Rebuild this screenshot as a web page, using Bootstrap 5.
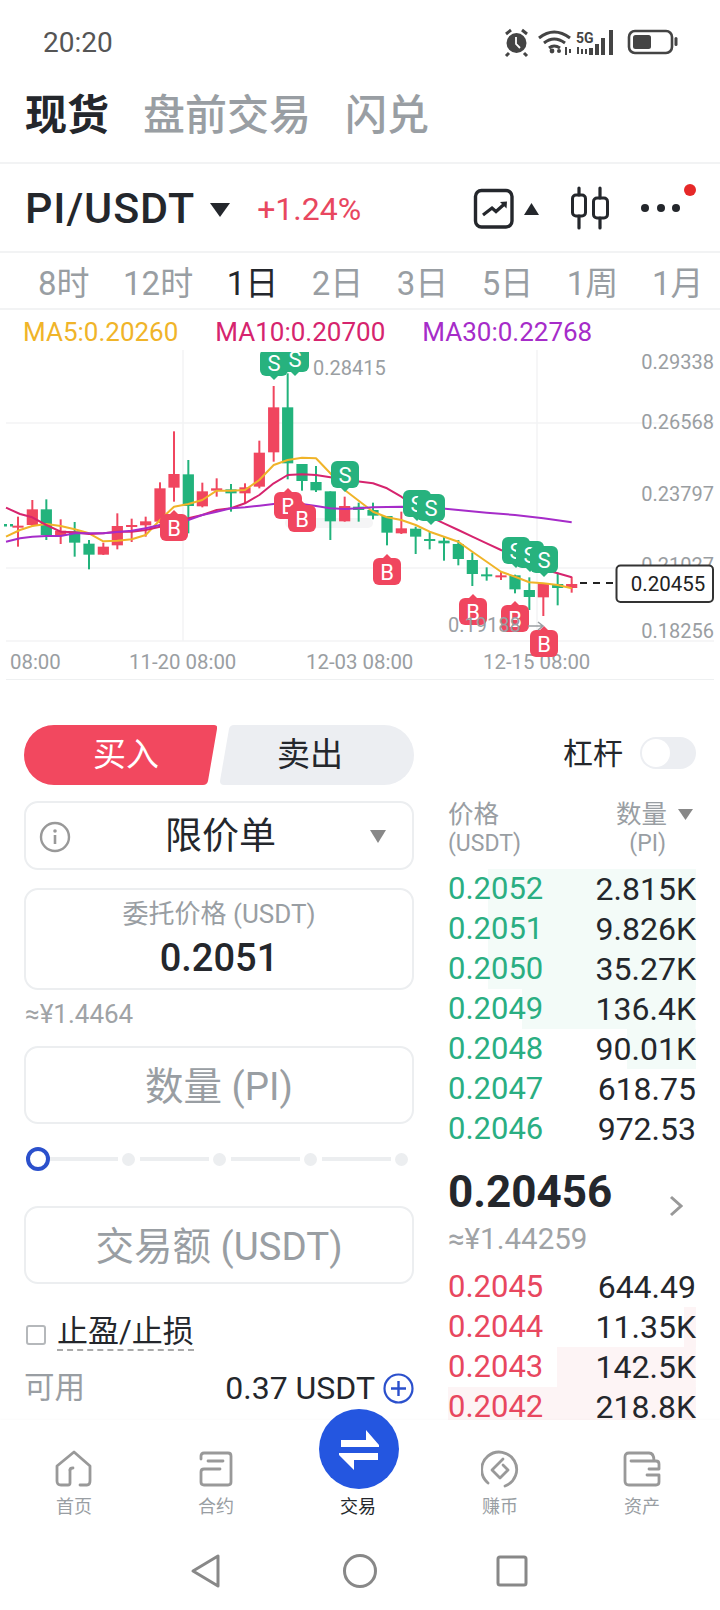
<!DOCTYPE html>
<html lang="zh">
<head>
<meta charset="utf-8">
<title>PI/USDT</title>
<link href="https://cdn.jsdelivr.net/npm/bootstrap@5.3.0/dist/css/bootstrap.min.css" rel="stylesheet">
<style>
:root{--ink:#24272c;--mute:#999ea3;--line:#eceef0;--up:#2aae82;--down:#e8475f;--blue:#2456e0}
html,body{margin:0;background:#fff}
body{width:720px;height:1610px;overflow:hidden;font-family:Roboto,"Noto Sans CJK SC",sans-serif;color:var(--ink)}
svg{display:block}
.statusbar{height:80px;padding:5px 41px 0 43px;font-size:28px;color:#555}
.tabbar{height:84px;padding:0 25px 12px;gap:34px;font-size:42px;font-weight:500;color:var(--mute);border-bottom:2px solid #f2f3f4}
.tabbar .on{font-weight:700;color:var(--ink)}
.pairrow{height:89px;padding:2px 0 0 25px;border-bottom:2px solid #f2f3f4;position:relative}
.pairname{font-size:43px;font-weight:500;letter-spacing:.9px}
.pairchg{font-size:32px;color:var(--down);margin-left:27px}
.tri{width:0;height:0;border-left:10px solid transparent;border-right:10px solid transparent;border-top:14px solid var(--ink);margin-left:15px;margin-top:2px}
.reddot{position:absolute;left:684px;top:20px;width:12px;height:12px;border-radius:50%;background:#e62828}
.pairicons{margin-right:30px;margin-top:-2px}
.timerow{height:57px;padding:6px 0 0 38px;gap:33.500px;font-size:33px;color:var(--mute);border-bottom:2px solid #f2f3f4;white-space:nowrap}
.timerow .on{color:var(--ink)}
.marow{height:35px;padding:9px 0 0 23px;gap:37px;font-size:26px;line-height:1}
.trade{height:740px;overflow:hidden;padding:45px 24px 0;gap:34px}
.leftcol{width:390px;flex:none}
.rightcol{width:248px;flex:none}
.sidebtn{height:60px;font-size:33px;line-height:60px;text-align:center}
.buybtn{width:193px;background:#f2485f;color:#fff;clip-path:path('M30 0H190Q194 0 193 4L184 56Q183 60 179 60H30A30 30 0 0 1 30 0Z');padding-left:11px}
.sellbtn{width:194px;margin-left:3px;background:#eceef2;clip-path:path('M14 0H164A30 30 0 0 1 164 60H4Q0 60 0 56L9 4Q10 0 14 0Z');padding-right:14px}
.fieldbox{border:2px solid var(--line);border-radius:14px;background:#fff}
.selectbox{height:69px;margin-top:16px;padding:2px 26px 0 13px;font-size:37px}
.priceinput{height:102px;margin-top:18px;text-align:center}
.pricelabel{font-size:26px;color:var(--mute);line-height:30px;padding-top:9px}
.pricevalue{font-size:38px;font-weight:500;line-height:50px;margin-top:4px}
.fiatnote{font-size:26px;color:#a0a3a6;line-height:28px;margin-top:10px;padding-left:1px}
.amountbox{height:78px;text-align:center;line-height:77px;font-size:38.500px;font-weight:400;color:var(--mute)}
.mt18{margin-top:18px}.mt35{margin-top:35px}
.sliderline{height:24px;margin-top:23px;padding-left:2px}
.sliderthumb{width:24px;height:24px;border-radius:50%;border:4px solid #2b50cc;flex:none}
.sliderseg{height:4px;background:var(--line);flex:none}
.sliderdot{width:13px;height:13px;border-radius:50%;background:var(--line);flex:none}
.tprow{margin-top:30px;height:38px;padding-left:2px}
.tprow .form-check-input{width:20px;height:20px;margin:11px 11px 0 0;border:2px solid #b5b8bb;border-radius:3px;flex:none}
.tplabel{font-size:31px;line-height:35px;border-bottom:2px dashed #aaa}
.availrow{margin-top:18px;font-size:30.500px;line-height:36px}
.availrow .lbl{color:var(--mute)}
.availnum{font-size:32px;gap:8px}
.levrow{height:56px;font-size:30px;gap:17px}
.levtrack{width:56px;height:32px;border-radius:16px;background:#eceef2;padding:2px}
.levknob{width:28px;height:28px;border-radius:50%;background:#fff}
.obhead{margin-top:19px;font-size:25.500px;line-height:29px;color:var(--mute);height:69px}
.obhead .subl{font-size:23px}
.obrow{height:40px;line-height:40px;font-size:31px;background-repeat:no-repeat;background-position:right top}
.obrow .qty{font-size:32px}
.bidrow{background-image:linear-gradient(#f3fbf8,#f3fbf8)}
.askrow{background-image:linear-gradient(#fdf4f5,#fdf4f5)}
.bidrow .px{color:var(--up)}
.askrow .px{color:var(--down)}
.midblock{height:118px;padding-top:19px}
.midprice{font-size:44px;font-weight:700;line-height:48px}
.midfiat{font-size:29.500px;color:#a0a3a6;line-height:32px;margin-top:7px}
.midchev{margin:27px 13px 0 0}
.tabnav{height:190px;background:#fff;position:relative;box-shadow:0 -1px 2px rgba(0,0,0,.02)}
.navgrid{padding:30px 3px 0;display:grid;grid-template-columns:repeat(5,142px)}
.navitem{text-align:center;font-size:18px;color:var(--mute);line-height:22px}
.navitem svg{margin:0 auto 8px}
.navspacer{height:46px}
.navitem.on{color:var(--ink)}
.navbubble{position:absolute;left:319px;top:-11px;width:80px;height:80px;border-radius:50%;background:var(--blue)}
.sysbar{margin-top:32px}
</style>
</head>
<body>

<div class="statusbar d-flex align-items-center justify-content-between">
  <span>20:20</span>
  <svg width="175" height="30" viewBox="505 28 175 30" fill="none">
    <circle cx="517.5" cy="43" r="10" fill="#444"/>
    <path d="M507 34l5-4M528 34l-5-4M510 53l-3 3M525 53l3 3" stroke="#444" stroke-width="3"/>
    <path d="M517 37v7l4 4" stroke="#fff" stroke-width="1.8"/>
    <path d="M540 38q15-12 31 0M545 43q10-8 21 0M550 48q5-4 11 0" stroke="#444" stroke-width="3"/>
    <circle cx="553" cy="51" r="2.4" fill="#444"/><circle cx="560" cy="51" r="2" fill="#444"/>
    <path d="M567 47v8M571 49v4" stroke="#444" stroke-width="2"/>
    <text x="577" y="43" font-size="14" font-weight="700" fill="#444" font-family="Roboto">5G</text>
    <path d="M579 47v7M583 49v5M587 49v5" stroke="#444" stroke-width="2"/>
    <path d="M592 48v7M598 44v11M604 38v17M612 30v25" stroke="#444" stroke-width="4"/>
    <rect x="630" y="31" width="43" height="22" rx="6" stroke="#444" stroke-width="2.6"/>
    <rect x="634" y="35" width="18" height="14" rx="2.5" fill="#444"/>
    <rect x="675.5" y="37" width="3" height="9" rx="1.5" fill="#444"/>
  </svg>
</div>

<div class="tabbar d-flex align-items-center">
  <span class="on">现货</span><span>盘前交易</span><span>闪兑</span>
</div>

<div class="pairrow d-flex align-items-center">
  <span class="pairname">PI/USDT</span><span class="tri"></span>
  <span class="pairchg">+1.24%</span>
  <svg class="ms-auto pairicons" width="220" height="50" viewBox="470 183 220 50" fill="none">
    <rect x="475.5" y="190.5" width="36.5" height="36.5" rx="6" stroke="#24272c" stroke-width="3.4"/>
    <path d="M483 215l9-7 4 3.500 9-8" stroke="#24272c" stroke-width="3.200"/>
    <path d="M500 202l7-.5-.5 7z" fill="#24272c"/>
    <path d="M524 215l7.500-12 7.500 12z" fill="#24272c"/>
    <path d="M579 188v7M579 216v12M600 188v10M600 218v10" stroke="#24272c" stroke-width="3.200" stroke-linecap="round"/>
    <rect x="572.500" y="195" width="13" height="21" rx="3.500" stroke="#24272c" stroke-width="3"/>
    <rect x="593.500" y="198" width="14" height="20" rx="3.500" stroke="#24272c" stroke-width="3"/>
    <circle cx="645" cy="208" r="4" fill="#24272c"/><circle cx="661" cy="208" r="4" fill="#24272c"/><circle cx="676" cy="208" r="4" fill="#24272c"/>
  </svg>
  <span class="reddot"></span>
</div>

<div class="timerow d-flex align-items-center">
  <span>8时</span><span>12时</span><span class="on">1日</span><span>2日</span><span>3日</span><span>5日</span><span>1周</span><span>1月</span>
</div>

<div class="marow d-flex">
  <span style="color:#f0b429">MA5:0.20260</span><span style="color:#d6246e">MA10:0.20700</span><span style="color:#a62cc9">MA30:0.22768</span>
</div>

<svg id="chart" width="720" height="335" viewBox="0 345 720 335" font-family="Roboto,sans-serif">
  <defs><clipPath id="plot"><rect x="0" y="352" width="720" height="330"/></clipPath></defs>
  <path d="M6 423H714M6 568H714M6 641H714M183 350V641M537 350V641" stroke="#f3f4f5" stroke-width="1.500" fill="none"/>
  <path d="M6 680H714" stroke="#e9ebed" stroke-width="1.500"/>
  <rect x="285" y="518" width="88" height="10" rx="5" fill="#f5f5f6"/>
  <g font-size="20" fill="#9a9ea2" text-anchor="end">
    <text x="714" y="369">0.29338</text><text x="714" y="429">0.26568</text><text x="714" y="501">0.23797</text><text x="714" y="572">0.21027</text><text x="714" y="638">0.18256</text>
  </g>
  <g font-size="20.400" fill="#9a9ea2">
    <text x="10" y="669">08:00</text><text x="129" y="669">11-20 08:00</text><text x="306" y="669">12-03 08:00</text><text x="483" y="669">12-15 08:00</text>
  </g>
  <g id="candles"></g>
  <g id="malines" fill="none" stroke-width="2" stroke-linejoin="round"></g>
  <text x="313" y="375" font-size="20" fill="#9a9ea2">0.28415</text>
  <path d="M306 368H291M296 364l-5 4 5 4" stroke="#9a9ea2" stroke-width="1.500" fill="none"/>
  <g id="badges" clip-path="url(#plot)" font-size="22" text-anchor="middle" fill="#fff"></g>
  <text x="448" y="632" font-size="20" fill="#9a9ea2">0.19188</text>
  <path d="M528 626H543M538 622l5 4-5 4" stroke="#9a9ea2" stroke-width="1.500" fill="none"/>
  <path d="M580 583H616" stroke="#222" stroke-width="2" stroke-dasharray="7 6"/>
  <rect x="616.500" y="565.500" width="96.500" height="36.500" rx="4" fill="#fff" stroke="#333" stroke-width="2"/>
  <text x="668" y="591" font-size="20.500" fill="#222" text-anchor="middle">0.20455</text>
</svg>

<div class="trade d-flex">
  <div class="leftcol">
    <div class="d-flex">
      <div class="sidebtn buybtn">买入</div>
      <div class="sidebtn sellbtn">卖出</div>
    </div>
    <div class="fieldbox selectbox d-flex align-items-center justify-content-between">
      <svg width="32" height="32" viewBox="0 0 32 32" fill="none"><circle cx="16" cy="16" r="14" stroke="#999" stroke-width="2.400"/><circle cx="16" cy="10" r="1.800" fill="#999"/><path d="M16 14v9" stroke="#999" stroke-width="2.600"/></svg>
      <span>限价单</span>
      <svg width="16" height="13" viewBox="0 0 16 13"><path d="M0 0h16l-8 13z" fill="#888"/></svg>
    </div>
    <div class="fieldbox priceinput">
      <div class="pricelabel">委托价格 (USDT)</div>
      <div class="pricevalue">0.2051</div>
    </div>
    <div class="fiatnote">≈¥1.4464</div>
    <div class="fieldbox amountbox mt18">数量 (PI)</div>
    <div class="sliderline d-flex align-items-center">
      <span class="sliderthumb"></span><span class="sliderseg" style="width:68px"></span>
      <span class="sliderdot" style="margin-left:4px"></span><span class="sliderseg" style="width:69px;margin-left:5px"></span>
      <span class="sliderdot" style="margin-left:4px"></span><span class="sliderseg" style="width:69px;margin-left:5px"></span>
      <span class="sliderdot" style="margin-left:4px"></span><span class="sliderseg" style="width:69px;margin-left:5px"></span>
      <span class="sliderdot" style="margin-left:4px"></span>
    </div>
    <div class="fieldbox amountbox mt35">交易额 (USDT)</div>
    <div class="tprow d-flex align-items-start">
      <input class="form-check-input" type="checkbox" aria-label="止盈/止损">
      <span class="tplabel">止盈/止损</span>
    </div>
    <div class="availrow d-flex align-items-center justify-content-between">
      <span class="lbl">可用</span>
      <span class="d-flex align-items-center availnum">0.37 USDT
        <svg width="31" height="31" viewBox="0 0 31 31" fill="none"><circle cx="15.500" cy="15.500" r="14" stroke="#2b50cc" stroke-width="2.200"/><path d="M8 15.500h15M15.500 8v15" stroke="#2b50cc" stroke-width="2.400"/></svg>
      </span>
    </div>
  </div>

  <div class="rightcol">
    <div class="levrow d-flex align-items-center justify-content-end">
      <span>杠杆</span><div class="levtrack"><div class="levknob"></div></div>
    </div>
    <div class="obhead d-flex justify-content-between">
      <div>价格<div class="subl">(USDT)</div></div>
      <div class="text-end" style="padding-right:3px">
        <div class="d-flex align-items-center" style="gap:11px">数量<svg width="15" height="11" viewBox="0 0 15 11"><path d="M0 0h15l-7.500 11z" fill="#888"/></svg></div>
        <div class="subl" style="padding-right:27px">(PI)</div>
      </div>
    </div>
    <div class="obrow bidrow d-flex justify-content-between" style="background-size:84% 100%"><span class="px">0.2052</span><span class="qty">2.815K</span></div>
    <div class="obrow bidrow d-flex justify-content-between" style="background-size:84% 100%"><span class="px">0.2051</span><span class="qty">9.826K</span></div>
    <div class="obrow bidrow d-flex justify-content-between" style="background-size:84% 100%"><span class="px">0.2050</span><span class="qty">35.27K</span></div>
    <div class="obrow bidrow d-flex justify-content-between" style="background-size:70% 100%"><span class="px">0.2049</span><span class="qty">136.4K</span></div>
    <div class="obrow bidrow d-flex justify-content-between" style="background-size:28% 100%"><span class="px">0.2048</span><span class="qty">90.01K</span></div>
    <div class="obrow bidrow d-flex justify-content-between" style="background-size:0 100%"><span class="px">0.2047</span><span class="qty">618.75</span></div>
    <div class="obrow bidrow d-flex justify-content-between" style="background-size:0 100%"><span class="px">0.2046</span><span class="qty">972.53</span></div>
    <div class="midblock d-flex justify-content-between">
      <div>
        <div class="midprice">0.20456</div>
        <div class="midfiat">≈¥1.44259</div>
      </div>
      <svg class="midchev" width="14" height="22" viewBox="0 0 14 22" fill="none"><path d="M2 2l10 9-10 9" stroke="#999" stroke-width="3"/></svg>
    </div>
    <div class="obrow askrow d-flex justify-content-between" style="background-size:0 100%"><span class="px">0.2045</span><span class="qty">644.49</span></div>
    <div class="obrow askrow d-flex justify-content-between" style="background-size:5% 100%"><span class="px">0.2044</span><span class="qty">11.35K</span></div>
    <div class="obrow askrow d-flex justify-content-between" style="background-size:56% 100%"><span class="px">0.2043</span><span class="qty">142.5K</span></div>
    <div class="obrow askrow d-flex justify-content-between" style="background-size:100% 100%"><span class="px">0.2042</span><span class="qty">218.8K</span></div>
  </div>
</div>

<div class="tabnav">
  <div class="navbubble">
    <svg width="80" height="80" viewBox="0 0 80 80"><path d="M22 31H47V21L60 36V38H22ZM59 44V51H35V61L20 46V44Z" fill="#fff"/></svg>
  </div>
  <nav class="navgrid">
    <div class="navitem">
      <svg width="38" height="38" viewBox="0 0 38 38" fill="none" stroke="#999" stroke-width="2.800" stroke-linecap="round" stroke-linejoin="round"><path d="M15 20v13q0 2-2 2H6q-4 0-4-4V16L19 2l16 14v15q0 4-3 4h-7"/><path d="M15 20q0-2 3-2"/></svg>
      首页
    </div>
    <div class="navitem">
      <svg width="38" height="38" viewBox="0 0 38 38" fill="none" stroke="#999" stroke-width="2.800" stroke-linecap="round"><path d="M4 9V6q0-3 3-3h24q3 0 3 3v26q0 3-3 3H7q-3 0-3-3V22q0-3 3-3h16M11 11h15"/></svg>
      合约
    </div>
    <div class="navitem on">
      <div class="navspacer"></div>
      交易
    </div>
    <div class="navitem">
      <svg width="38" height="38" viewBox="0 0 38 38" fill="none" stroke="#999" stroke-width="2.800" stroke-linecap="round" stroke-linejoin="round"><path d="M7 33A17.500 17.500 0 1 1 24 36"/><path d="M22 9L11 20l8 8 8-8-5-5"/></svg>
      赚币
    </div>
    <div class="navitem">
      <svg width="38" height="38" viewBox="0 0 38 38" fill="none" stroke="#999" stroke-width="2.800" stroke-linecap="round" stroke-linejoin="round"><path d="M2 14V7q0-4 4-4h20q5 0 5 8M2 14v17q0 4 4 4h27q3 0 3-3v-7H24M26 19h10v-5q0-3-3-3H8"/></svg>
      资产
    </div>
  </nav>
  <svg class="sysbar" width="720" height="40" viewBox="0 1550 720 40" fill="none" stroke="#888" stroke-width="3" stroke-linejoin="round">
    <path d="M218 1556V1586L193 1571Z"/>
    <circle cx="360" cy="1571" r="15.500"/>
    <rect x="498" y="1557" width="28" height="28" rx="2"/>
  </svg>
</div>

<script>
(function(){
var NS='http://www.w3.org/2000/svg',G='#22b37c',R='#f0465f';
// [x, wickTop, wickBottom, bodyTop, bodyBottom, colour] measured in chart-crop units (3 units per px)
var c=[[54,590,680,617,620,R],[97,540,620,568,615,R],[139,538,660,568,645,G],[182,598,672,632,648,R],[224,606,710,634,668,G],[267,660,748,671,704,G],[310,668,705,680,704,R],[352,580,688,618,676,R],[395,596,666,615,620,R],[437,590,650,604,616,R],[480,487,610,505,605,R],[522,334,545,462,503,R],[565,420,640,463,558,G],[607,488,562,514,559,R],[650,475,530,505,512,R],[693,492,575,508,520,G],[735,490,552,502,520,R],[778,362,505,398,500,R],[821,198,425,262,397,R],[863,160,478,262,430,G],[906,432,512,432,483,G],[948,438,516,486,511,G],[991,514,660,514,604,G],[1034,530,605,558,604,R],[1076,548,605,560,570,G],[1119,548,598,570,587,G],[1161,588,676,588,638,G],[1204,575,642,625,640,R],[1247,620,702,626,650,G],[1289,635,688,657,660,G],[1332,650,722,662,670,G],[1375,660,736,672,717,G],[1417,698,798,720,762,G],[1460,742,782,763,766,G],[1503,755,780,766,769,R],[1545,764,820,766,808,G],[1588,772,870,810,831,G],[1630,790,888,790,832,R],[1673,758,856,792,804,G],[1715,770,818,792,804,R]];
var cg=document.getElementById('candles');
function el(n,a,p){var e=document.createElementNS(NS,n);for(var k in a)e.setAttribute(k,a[k]);p.appendChild(e);return e}
c.forEach(function(d){var x=d[0]/3;
 el('rect',{x:x-1,y:320+d[1]/3,width:2,height:(d[2]-d[1])/3,fill:d[5]},cg);
 el('rect',{x:x-5.6,y:320+d[3]/3,width:11.2,height:Math.max(2,(d[4]-d[3])/3),fill:d[5]},cg);
});
el('rect',{x:4,y:524,width:3,height:2.500,fill:G},cg);el('rect',{x:10,y:524,width:3,height:2.500,fill:G},cg);
var ma5=[18,650,60,630,97,618,139,612,182,618,224,628,267,640,310,664,352,662,395,658,437,645,480,600,522,560,565,552,607,540,650,512,693,512,735,510,778,480,821,435,863,420,906,413,948,415,991,460,1034,510,1080,545,1119,575,1161,592,1204,600,1247,615,1289,635,1332,650,1375,665,1417,695,1460,725,1503,755,1545,770,1588,787,1630,790,1673,795,1715,805];
var ma10=[18,563,60,582,97,592,139,615,182,635,224,637,267,642,310,640,352,635,395,635,437,630,480,620,522,608,565,595,607,585,650,570,693,565,735,550,778,525,821,490,863,465,906,463,948,465,991,472,1040,480,1119,490,1161,505,1204,530,1247,560,1289,590,1332,610,1375,630,1417,650,1460,670,1503,690,1545,705,1588,730,1630,748,1673,760,1715,772];
var ma30=[18,665,60,655,97,650,139,648,182,648,224,640,267,640,310,640,352,636,395,632,437,625,480,615,522,606,565,600,607,585,650,575,693,565,735,562,778,557,821,552,863,552,906,552,948,558,991,565,1034,567,1076,565,1119,562,1204,560,1289,562,1375,570,1460,578,1545,585,1630,595,1715,607];
var mg=document.getElementById('malines');
[[ma5,'#f0b429'],[ma10,'#d6246e'],[ma30,'#a62cc9']].forEach(function(m){var s=[];for(var i=0;i<m[0].length;i+=2)s.push((m[0][i]/3).toFixed(1)+','+(320+m[0][i+1]/3).toFixed(1));el('polyline',{points:s.join(' '),stroke:m[1]},mg)});
// badges: [left, top, letter]; S pointer below, B pointer above
var b=[[260,349,'S'],[281,345,'S'],[331,461,'S'],[403,490,'S'],[417,494,'S'],[502,537,'S'],[516,541,'S'],[530,546,'S'],[160,512,'B'],[274,490,'B'],[288,503,'B'],[373,556,'B'],[459,596,'B'],[501,603,'B'],[530,628,'B']];
var bg=document.getElementById('badges');
b.forEach(function(d){var x=d[0],y=d[1],S=d[2]=='S',col=S?'#27b27e':'#f0465f',cx=x+14;
 var ry=S?y:y+2;
 el('rect',{x:x,y:ry,width:28,height:27,rx:6,fill:col},bg);
 el('path',{d:S?'M'+(cx-4)+' '+(ry+27)+'L'+cx+' '+(ry+31)+'L'+(cx+4)+' '+(ry+27)+'Z':'M'+(cx-4)+' '+ry+'L'+cx+' '+(ry-4)+'L'+(cx+4)+' '+ry+'Z',fill:col},bg);
 var t=el('text',{x:cx,y:ry+21.500},bg);t.textContent=d[2];
});
})();
</script>
</body>
</html>
